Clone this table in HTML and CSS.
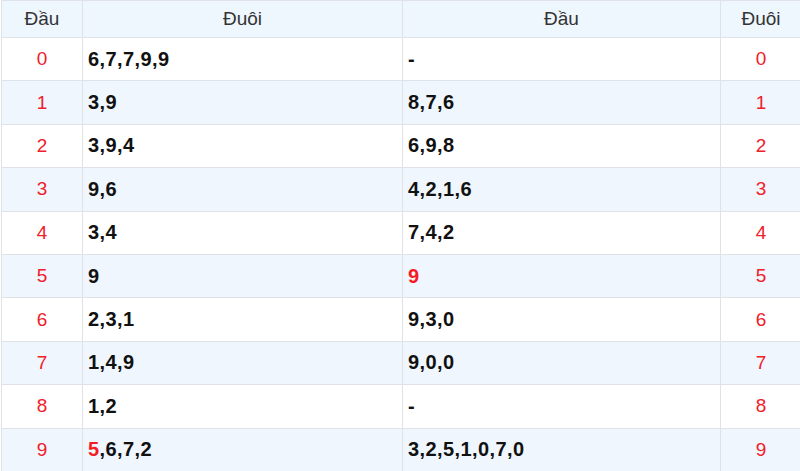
FILE: index.html
```html
<!DOCTYPE html>
<html>
<head>
<meta charset="utf-8">
<link rel="stylesheet" href="styles.css">
</head>
<body>
<div class="wrap">
<table class="lt">
  <colgroup>
    <col class="c1"><col class="c2"><col class="c3"><col class="c4">
  </colgroup>
  <thead>
    <tr><th>Đầu</th><th>Đuôi</th><th>Đầu</th><th>Đuôi</th></tr>
  </thead>
  <tbody>
    <tr><td class="idx">0</td><td class="val">6,7,7,9,9</td><td class="val">-</td><td class="idx">0</td></tr>
    <tr><td class="idx">1</td><td class="val">3,9</td><td class="val">8,7,6</td><td class="idx">1</td></tr>
    <tr><td class="idx">2</td><td class="val">3,9,4</td><td class="val">6,9,8</td><td class="idx">2</td></tr>
    <tr><td class="idx">3</td><td class="val">9,6</td><td class="val">4,2,1,6</td><td class="idx">3</td></tr>
    <tr><td class="idx">4</td><td class="val">3,4</td><td class="val">7,4,2</td><td class="idx">4</td></tr>
    <tr><td class="idx">5</td><td class="val">9</td><td class="val"><span class="hl">9</span></td><td class="idx">5</td></tr>
    <tr><td class="idx">6</td><td class="val">2,3,1</td><td class="val">9,3,0</td><td class="idx">6</td></tr>
    <tr><td class="idx">7</td><td class="val">1,4,9</td><td class="val">9,0,0</td><td class="idx">7</td></tr>
    <tr><td class="idx">8</td><td class="val">1,2</td><td class="val">-</td><td class="idx">8</td></tr>
    <tr><td class="idx">9</td><td class="val"><span class="hl">5</span>,6,7,2</td><td class="val">3,2,5,1,0,7,0</td><td class="idx">9</td></tr>
  </tbody>
</table>
</div>
</body>
</html>
```
FILE: styles.css
```css
html, body {
  margin: 0;
  padding: 0;
  background: #ffffff;
  overflow: hidden;
}
.wrap {
  padding-left: 1px;
  width: 820px;
}
.lt {
  border-collapse: collapse;
  table-layout: fixed;
  width: 800px;
  font-family: "Liberation Sans", Arial, sans-serif;
  color: #222222;
}
.c1 { width: 81px; }
.c2 { width: 320px; }
.c3 { width: 318px; }
.c4 { width: 81px; }
.lt th, .lt td {
  border: 1px solid #dfe3e8;
}
.lt th {
  height: 36px;
  padding: 0;
  font-weight: normal;
  font-size: 19px;
  color: #333333;
  background: #eef6fe;
  text-align: center;
  vertical-align: middle;
}
.lt td {
  height: 42.4px;
  padding: 0 5px;
  vertical-align: middle;
}
.lt tbody tr:nth-child(even) td {
  background: #eff6fe;
}
.idx {
  text-align: center;
  color: #f0202a;
  font-size: 19px;
}
.val {
  text-align: left;
  font-weight: bold;
  font-size: 20px;
  letter-spacing: 0.4px;
  color: #111111;
}
.hl {
  color: #f41c24;
}
```
